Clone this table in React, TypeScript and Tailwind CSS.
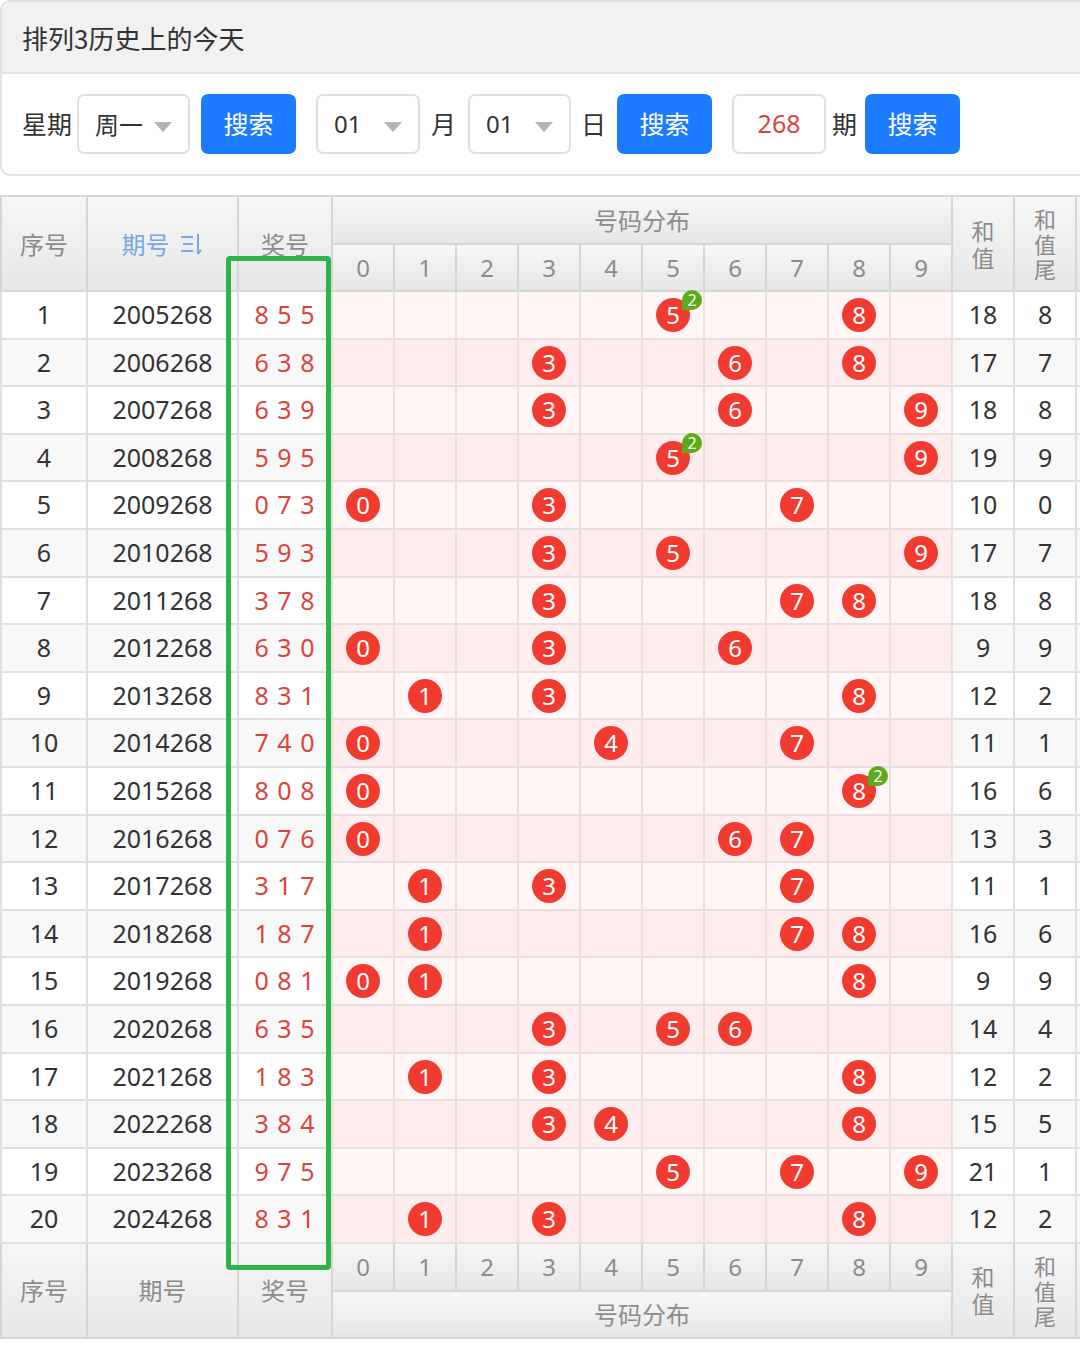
import React from 'react';

const rows = [
  ['2005268', '855'],
  ['2006268', '638'],
  ['2007268', '639'],
  ['2008268', '595'],
  ['2009268', '073'],
  ['2010268', '593'],
  ['2011268', '378'],
  ['2012268', '630'],
  ['2013268', '831'],
  ['2014268', '740'],
  ['2015268', '808'],
  ['2016268', '076'],
  ['2017268', '317'],
  ['2018268', '187'],
  ['2019268', '081'],
  ['2020268', '635'],
  ['2021268', '183'],
  ['2022268', '384'],
  ['2023268', '975'],
  ['2024268', '831'],
];

const digits = [0, 1, 2, 3, 4, 5, 6, 7, 8, 9];

const cjk = { fontFamily: '"Noto Sans CJK SC", "Noto Sans", sans-serif' };
const num = { fontFamily: '"Noto Sans", "Noto Sans CJK SC", sans-serif' };

const Caret = () => (
  <svg width="18" height="10" viewBox="0 0 18 10" className="absolute right-[16px] top-[26px]">
    <path d="M0 0 H18 L9 10 Z" fill="#b3b3b3" />
  </svg>
);

const SelectBox = ({ value, width }: { value: string; width: string }) => (
  <div className={`relative h-[60px] ${width} rounded-[7px] border-2 border-[#e0e0e0] bg-white pl-[16px] flex items-center text-[24px] text-[#333]`}>
    <span>{value}</span>
    <Caret />
  </div>
);

const SearchButton = () => (
  <button className="h-[60px] w-[95px] rounded-[7px] bg-[#1c7bff] text-white text-[25px] flex items-center justify-center" style={cjk}>
    搜索
  </button>
);

const Ball = ({ n, count }: { n: number; count: number }) => (
  <span className="relative inline-flex h-[34px] w-[34px] items-center justify-center rounded-full bg-[#f23b30] text-white text-[24px] leading-none" style={num}>
    {n}
    {count > 1 && (
      <span className="absolute left-[26px] -top-[8px] flex h-[20px] w-[20px] items-center justify-center rounded-full rounded-bl-none bg-[#5cab1b] text-[16px] leading-none text-white">
        {count}
      </span>
    )}
  </span>
);

const headCell = 'border-2 border-[#d6d6d6] bg-gradient-to-b from-[#f7f7f7] to-[#e7e7e7] text-[#8c8c8c] font-normal text-[24px] p-0';

const StackText = ({ chars }: { chars: string[] }) => (
  <div className={`flex flex-col items-center ${chars.length > 2 ? 'text-[22px] leading-[25px]' : 'text-[23px] leading-[27px]'}`}>
    {chars.map((c, i) => (
      <span key={i}>{c}</span>
    ))}
  </div>
);

export default function App() {
  return (
    <div className="w-[1080px] min-h-[1357px] bg-white overflow-hidden" style={cjk}>
      {/* search card */}
      <div className="ml-0 mr-[-20px] rounded-[10px] border-2 border-[#e2e2e2] overflow-hidden">
        <div className="h-[72px] bg-[#f1f1f1] border-b-2 border-[#e2e2e2] flex items-center pl-[20px] text-[26px] text-[#333]">
          排列3历史上的今天
        </div>
        <div className="h-[100px] bg-white flex items-center pl-[20px] text-[25px] text-[#333]">
          <span className="mr-[5px]">星期</span>
          <SelectBox value="周一" width="w-[113px]" />
          <div className="ml-[11px]"><SearchButton /></div>
          <div className="ml-[20px]" style={num}><SelectBox value="01" width="w-[104px]" /></div>
          <span className="ml-[11px] mr-[12px]">月</span>
          <div style={num}><SelectBox value="01" width="w-[103px]" /></div>
          <span className="ml-[10px] mr-[11px]">日</span>
          <SearchButton />
          <div className="ml-[20px] h-[60px] w-[94px] rounded-[7px] border-2 border-[#e0e0e0] flex items-center justify-center text-[#d8453c]" style={num}>
            268
          </div>
          <span className="ml-[6px] mr-[8px]">期</span>
          <SearchButton />
        </div>
      </div>

      {/* table */}
      <div className="relative mt-[19px] w-[1080px] overflow-hidden">
        <table className="table-fixed border-collapse w-[1140px]">
          <colgroup>
            <col className="w-[86px]" />
            <col className="w-[151px]" />
            <col className="w-[94px]" />
            {digits.map((d) => (
              <col key={d} className="w-[62px]" />
            ))}
            <col className="w-[62px]" />
            <col className="w-[62px]" />
            <col className="w-[65px]" />
          </colgroup>
          <thead>
            <tr className="h-[48px]">
              <th rowSpan={2} className={headCell}>序号</th>
              <th rowSpan={2} className={`${headCell} text-[#75a9e8]`}>
                <span className="inline-flex items-center gap-[10px]">
                  期号
                  <svg width="24" height="24" viewBox="0 0 24 24">
                    <path d="M1 5 H13 M3 12 H13 M1 19 H13" stroke="#75a9e8" strokeWidth="2" />
                    <path d="M18 2 V22 M18 22 L21 18" stroke="#75a9e8" strokeWidth="2" fill="none" />
                  </svg>
                </span>
              </th>
              <th rowSpan={2} className={headCell}>奖号</th>
              <th colSpan={10} className={headCell}>号码分布</th>
              <th rowSpan={2} className={headCell}><StackText chars={['和', '值']} /></th>
              <th rowSpan={2} className={headCell}><StackText chars={['和', '值', '尾']} /></th>
              <th rowSpan={2} className={headCell}></th>
            </tr>
            <tr className="h-[47px]">
              {digits.map((d) => (
                <th key={d} className={`${headCell} font-light`} style={num}>{d}</th>
              ))}
            </tr>
          </thead>
          <tbody>
            {rows.map(([issue, prize], i) => {
              const ds = prize.split('').map(Number);
              const sum = ds.reduce((a, b) => a + b, 0);
              const even = i % 2 === 1;
              const plain = even ? 'bg-[#f8f8f8]' : 'bg-white';
              const pink = even ? 'bg-[#ffeded]' : 'bg-[#fff6f5]';
              return (
                <tr key={issue} className="h-[47.6px] text-[25px] text-[#333]" style={num}>
                  <td className={`border-2 border-[#e0e0e0] text-center p-0 ${plain}`}>{i + 1}</td>
                  <td className={`border-2 border-[#e0e0e0] text-center p-0 ${plain}`}>{issue}</td>
                  <td className={`border-2 border-[#e0e0e0] text-center p-0 text-[#d8453c] tracking-[1px] ${plain}`}>
                    {ds.join(' ')}
                  </td>
                  {digits.map((d) => {
                    const count = ds.filter((x) => x === d).length;
                    return (
                      <td key={d} className={`border-2 border-[#e8e0e0] text-center p-0 ${pink}`}>
                        {count > 0 && <Ball n={d} count={count} />}
                      </td>
                    );
                  })}
                  <td className={`border-2 border-[#e0e0e0] text-center p-0 ${plain}`}>{sum}</td>
                  <td className={`border-2 border-[#e0e0e0] text-center p-0 ${plain}`}>{sum % 10}</td>
                  <td className={`border-2 border-[#e0e0e0] p-0 ${plain}`}></td>
                </tr>
              );
            })}
          </tbody>
          <tfoot>
            <tr className="h-[48px]">
              <th rowSpan={2} className={headCell}>序号</th>
              <th rowSpan={2} className={headCell}>期号</th>
              <th rowSpan={2} className={headCell}>奖号</th>
              {digits.map((d) => (
                <th key={d} className={`${headCell} font-light`} style={num}>{d}</th>
              ))}
              <th rowSpan={2} className={headCell}><StackText chars={['和', '值']} /></th>
              <th rowSpan={2} className={headCell}><StackText chars={['和', '值', '尾']} /></th>
              <th rowSpan={2} className={headCell}></th>
            </tr>
            <tr className="h-[47px]">
              <th colSpan={10} className={headCell}>号码分布</th>
            </tr>
          </tfoot>
        </table>
        {/* annotation frame */}
        <div className="pointer-events-none absolute left-[226px] top-[61px] h-[1014px] w-[105px] rounded-[4px] border-[5px] border-[#2fb14b]" />
      </div>
    </div>
  );
}
